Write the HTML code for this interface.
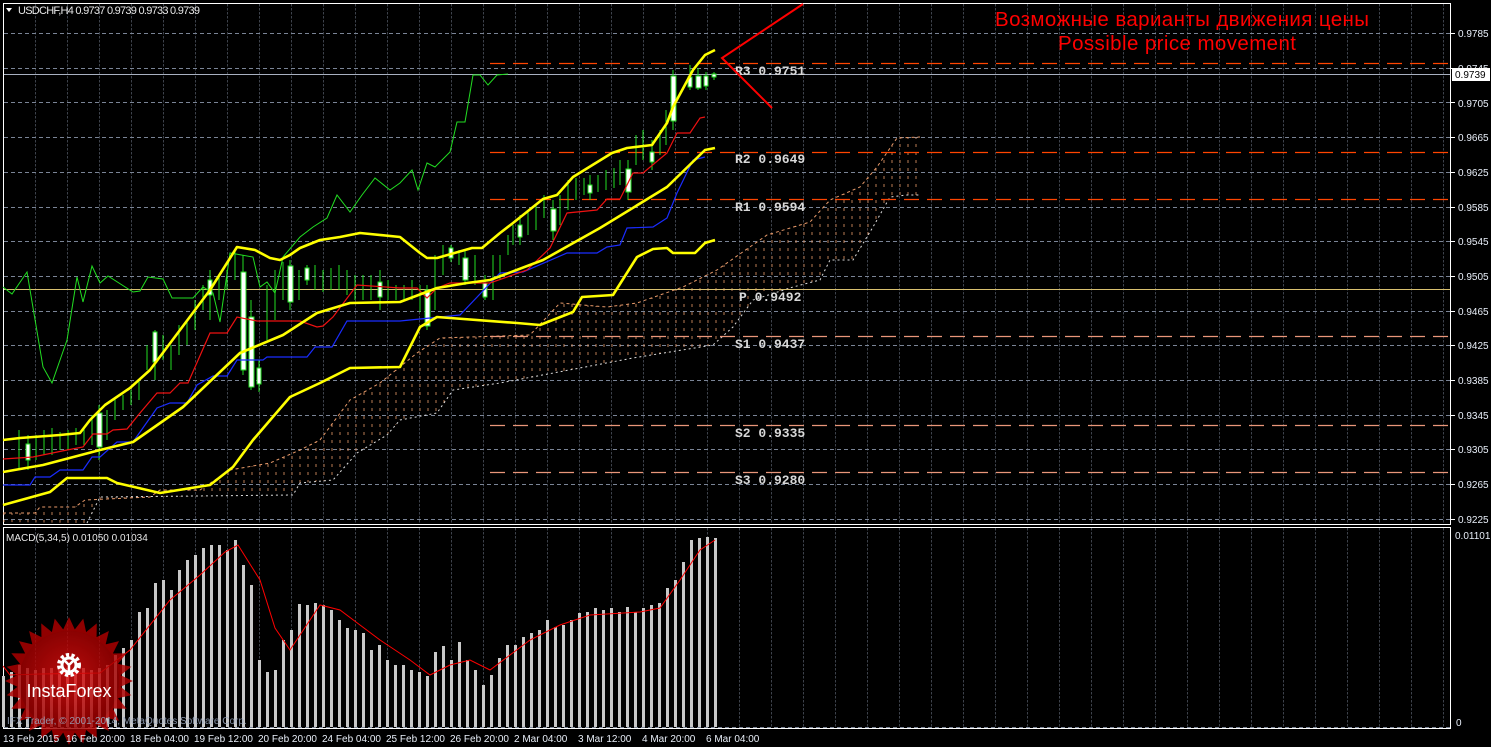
<!DOCTYPE html>
<html><head><meta charset="utf-8"><style>
html,body{margin:0;padding:0;background:#000;width:1491px;height:747px;overflow:hidden}
svg{display:block}
text{font-family:"Liberation Sans",sans-serif}
text.mono{font-family:"Liberation Mono",monospace;font-weight:bold}
</style></head><body>
<svg width="1491" height="747" viewBox="0 0 1491 747" xmlns="http://www.w3.org/2000/svg">
<defs>
<pattern id="vg" x="3.5" y="0" width="32" height="4" patternUnits="userSpaceOnUse">
<line x1="0" y1="0" x2="0" y2="2.5" stroke="#7a8496" stroke-width="1"/>
</pattern>
<pattern id="hatch" x="0" y="0" width="8" height="8" patternUnits="userSpaceOnUse">
<line x1="4" y1="0" x2="4" y2="3" stroke="#e89a6a" stroke-width="1"/>
</pattern>
<clipPath id="cloud"><polygon points="3,513 35,513 40,507 75,507 85,500 150,497 160,490 200,490 230,470 270,463 300,450 320,440 350,400 380,383 417,353 440,338 530,335 560,303 607,307 637,303 683,287 717,270 767,235 810,222 830,200 860,187 877,167 897,138 920,137 920,195 907,195 890,197 873,227 853,260 830,260 820,280 793,287 753,300 733,327 713,345 633,358 500,383 453,390 437,413 420,413 400,420 387,435 357,453 333,480 300,483 293,495 150,497 100,497 87,523 3,522"/></clipPath>
<radialGradient id="rg" cx="0.5" cy="0.45" r="0.5"><stop offset="0" stop-color="#e01010"/><stop offset="1" stop-color="#a00000"/></radialGradient>
<polygon id="spike" points="0,-64 -6.5,-50 6.5,-50"/>
</defs>
<rect x="3.5" y="3.5" width="1447" height="521" fill="none" stroke="#fff" stroke-width="1"/>
<rect x="3.5" y="527.5" width="1447" height="201" fill="none" stroke="#fff" stroke-width="1"/>
<rect x="4" y="4" width="1446" height="520" fill="url(#vg)"/>
<rect x="4" y="528" width="1446" height="200" fill="url(#vg)"/>
<g stroke="#7a8496" stroke-width="1" stroke-dasharray="4,3">
<line x1="4" y1="33.5" x2="1450" y2="33.5"/><line x1="4" y1="68.5" x2="1450" y2="68.5"/>
<line x1="4" y1="102.5" x2="1450" y2="102.5"/><line x1="4" y1="137.5" x2="1450" y2="137.5"/>
<line x1="4" y1="172.5" x2="1450" y2="172.5"/><line x1="4" y1="207.5" x2="1450" y2="207.5"/>
<line x1="4" y1="241.5" x2="1450" y2="241.5"/><line x1="4" y1="276.5" x2="1450" y2="276.5"/>
<line x1="4" y1="311.5" x2="1450" y2="311.5"/><line x1="4" y1="345.5" x2="1450" y2="345.5"/>
<line x1="4" y1="380.5" x2="1450" y2="380.5"/><line x1="4" y1="415.5" x2="1450" y2="415.5"/>
<line x1="4" y1="449.5" x2="1450" y2="449.5"/><line x1="4" y1="484.5" x2="1450" y2="484.5"/>
<line x1="4" y1="519.5" x2="1450" y2="519.5"/>
<line x1="4" y1="727.5" x2="1450" y2="727.5"/>
</g>
<rect x="0" y="130" width="930" height="400" fill="url(#hatch)" clip-path="url(#cloud)" opacity="0.8"/>
<polyline fill="none" stroke="#e89a6a" stroke-dasharray="3,3" points="3,513 35,513 40,507 75,507 85,500 150,497 160,490 200,490 230,470 270,463 300,450 320,440 350,400 380,383 417,353 440,338 530,335 560,303 607,307 637,303 683,287 717,270 767,235 810,222 830,200 860,187 877,167 897,138 920,137"/>
<polyline fill="none" stroke="#ddd" stroke-dasharray="2,3" points="87,523 100,497 293,495 300,483 333,480 357,453 387,435 400,420 437,413 453,390 500,383 633,358 713,345 733,327 753,300 793,287 820,280 830,260 853,260 873,227 890,197 907,195 920,195"/>
<g stroke-width="1.2" stroke-dasharray="15,8">
<line x1="490" y1="63.5" x2="1450" y2="63.5" stroke="#ff4500"/>
<line x1="490" y1="152.5" x2="1450" y2="152.5" stroke="#ff4500"/>
<line x1="490" y1="199.5" x2="1450" y2="199.5" stroke="#ff4500"/>
<line x1="490" y1="336.5" x2="1450" y2="336.5" stroke="#e9967a"/>
<line x1="490" y1="425.5" x2="1450" y2="425.5" stroke="#e9967a"/>
<line x1="490" y1="472.5" x2="1450" y2="472.5" stroke="#e9967a"/>
</g>
<line x1="4" y1="289.5" x2="1450" y2="289.5" stroke="#d8c070" stroke-width="1"/>
<line x1="4" y1="74.5" x2="1450" y2="74.5" stroke="#a8b0c0" stroke-width="1"/>
<g font-size="13" fill="#d8d8d8">
<text class="mono" x="735" y="75">R3  0.9751</text>
<text class="mono" x="735" y="163">R2  0.9649</text>
<text class="mono" x="735" y="211">R1  0.9594</text>
<text class="mono" x="739" y="301">P  0.9492</text>
<text class="mono" x="735" y="348">S1  0.9437</text>
<text class="mono" x="735" y="437">S2  0.9335</text>
<text class="mono" x="735" y="484">S3  0.9280</text>
</g>
<polyline fill="none" stroke="#22dd22" stroke-width="1" points="3,287 12,294 27,272 43,367 52,383 67,340 77,277 83,302 92,266 100,283 108,276 133,292 140,291 148,277 163,279 172,298 193,298 203,287 213,293 220,322 230,253 253,257 260,287 267,282 275,293 283,257 300,237 313,227 327,218 337,195 350,212 362,195 375,178 390,190 400,183 412,170 418,190 427,163 435,167 450,152 457,122 465,122 473,75 480,75 488,85 497,75 508,74"/>
<g stroke="#22dd22" stroke-width="1" fill="#fff">
<line x1="28" y1="435" x2="28" y2="470"/><rect x="26" y="444" width="4" height="16"/>
<line x1="99" y1="405" x2="99" y2="460"/><rect x="97" y="413" width="5" height="34"/>
<line x1="155" y1="330" x2="155" y2="380"/><rect x="153" y="332" width="4" height="30"/>
<line x1="210" y1="270" x2="210" y2="320"/><rect x="208" y="280" width="4" height="15"/>
<line x1="243" y1="255" x2="243" y2="375"/><rect x="241" y="272" width="5" height="98"/>
<line x1="251" y1="300" x2="251" y2="390"/><rect x="249" y="317" width="5" height="70"/>
<line x1="259" y1="360" x2="259" y2="392"/><rect x="257" y="368" width="4" height="16"/>
<line x1="290" y1="260" x2="290" y2="310"/><rect x="288" y="266" width="5" height="36"/>
<line x1="307" y1="265" x2="307" y2="285"/><rect x="305" y="268" width="4" height="12"/>
<line x1="380" y1="270" x2="380" y2="310"/><rect x="378" y="282" width="4" height="15"/>
<line x1="427" y1="285" x2="427" y2="330"/><rect x="425" y="290" width="5" height="36"/>
<line x1="451" y1="245" x2="451" y2="262"/><rect x="449" y="248" width="4" height="10"/>
<line x1="465" y1="250" x2="465" y2="285"/><rect x="463" y="258" width="5" height="22"/>
<line x1="485" y1="275" x2="485" y2="300"/><rect x="483" y="283" width="4" height="14"/>
<line x1="520" y1="215" x2="520" y2="245"/><rect x="518" y="225" width="4" height="12"/>
<line x1="553" y1="200" x2="553" y2="240"/><rect x="551" y="209" width="5" height="22"/>
<line x1="590" y1="175" x2="590" y2="200"/><rect x="588" y="185" width="4" height="8"/>
<line x1="628" y1="160" x2="628" y2="200"/><rect x="626" y="169" width="5" height="23"/>
<line x1="652" y1="140" x2="652" y2="170"/><rect x="650" y="152" width="4" height="10"/>
<line x1="673" y1="70" x2="673" y2="130"/><rect x="671" y="76" width="5" height="45"/>
<line x1="690" y1="65" x2="690" y2="90"/><rect x="688" y="77" width="4" height="10"/>
<line x1="698" y1="68" x2="698" y2="90"/><rect x="696" y="76" width="5" height="12"/>
<line x1="706" y1="72" x2="706" y2="90"/><rect x="704" y="76" width="4" height="10"/>
<line x1="714" y1="72" x2="714" y2="80"/><rect x="712" y="74" width="4" height="3"/>
</g>
<g stroke="#22dd22" stroke-width="1" fill="none">
<path d="M19 430V470M36 435V460M44 430V455M52 428V455M60 432V450M68 430V450M76 428V445M84 428V445M92 415V445M107 410V440M115 398V420M123 395V410M131 390V405M139 380V400M147 345V370M163 335V360M171 345V370M179 325V355M187 320V345M195 300V330M203 285V310M219 275V300M227 270V290M235 250V280M267 285V340M275 270V320M283 262V300M299 270V300M315 265V290M323 270V292M331 268V290M339 265V290M347 270V295M355 275V300M363 275V300M371 275V300M388 280V300M396 285V300M404 285V300M412 280V300M420 285V312M435 255V310M443 245V275M459 250V265M475 255V285M493 255V300M500 255V280M508 235V255M513 225V245M528 210V235M536 205V230M544 195V218M560 195V225M568 180V210M576 178V200M584 178V195M598 175V192M606 170V190M614 168V188M620 160V185M636 135V165M643 130V160M660 130V155M666 110V145"/>
</g>
<polyline fill="none" stroke="#1a2cff" stroke-width="1.2" points="3,485 30,485 35,477 50,477 60,470 83,470 92,457 100,457 117,442 133,442 157,408 170,403 187,403 197,385 213,376 227,376 237,360 263,360 267,357 307,357 315,347 332,347 347,321 400,321 460,315 500,273 523,272 567,253 597,253 607,247 620,245 627,228 653,227 667,218 677,193 693,160 705,157"/>
<polyline fill="none" stroke="#ee1111" stroke-width="1.2" points="3,459 33,457 67,450 83,447 93,434 107,434 113,430 127,429 140,413 157,393 170,393 180,383 188,383 210,333 227,333 237,317 257,321 300,321 317,327 323,326 333,317 357,285 400,288 417,288 427,298 437,288 450,283 490,283 527,270 550,248 567,213 597,210 607,199 620,199 633,173 643,173 667,153 677,133 690,133 700,118 705,117"/>
<g fill="none" stroke="#ffff00" stroke-width="2.6" stroke-linejoin="round">
<polyline points="3,440 20,438 60,435 80,433 90,420 105,405 130,388 150,370 180,330 210,290 237,247 255,250 270,258 280,260 290,255 300,248 320,240 340,237 360,233 400,237 420,253 427,258 437,258 472,248 482,248 500,233 513,223 533,207 543,199 557,195 573,177 612,153 627,148 652,145 667,123 673,107 693,70 705,55 715,50"/>
<polyline points="3,472 43,465 100,450 133,442 183,407 240,353 283,335 317,313 350,303 400,302 437,288 467,283 490,280 543,260 600,228 667,187 705,150 715,148"/>
<polyline points="3,505 50,492 67,478 107,478 117,483 160,493 210,485 233,467 253,440 290,397 320,383 350,368 400,367 420,327 437,317 517,323 540,325 573,312 582,297 613,295 637,257 653,249 667,248 673,253 695,253 705,243 715,240"/>
</g>
<polyline fill="none" stroke="#ff0000" stroke-width="2" points="803,4 722,58 772,108"/>
<text x="1182" y="26" font-size="20.5" fill="#ff0000" text-anchor="middle" textLength="374">Возможные варианты движения цены</text>
<text x="1177" y="50" font-size="20.5" fill="#ff0000" text-anchor="middle" textLength="238">Possible price movement</text>
<polygon points="6,8 12,8 9,12" fill="#fff"/>
<text x="18" y="14" font-size="11" fill="#e8e8e8" textLength="182">USDCHF,H4  0.9737 0.9739 0.9733 0.9739</text>
<text x="6" y="541" font-size="10" fill="#e8e8e8">MACD(5,34,5) 0.01050 0.01034</text>
<path fill="none" stroke="#c8c8c8" stroke-width="3" d="M3.5 676V727M11.5 672V727M19.5 665V727M27.5 668V727M35.5 670V727M43.5 668V727M51.5 668V727M59.5 667V727M67.5 668V727M75.5 670V727M83.5 668V727M91.5 670V727M99.5 668V727M107.5 665V727M115.5 655V727M123.5 648V727M131.5 640V727M139.5 612V727M147.5 608V727M155.5 583V727M163.5 580V727M171.5 590V727M179.5 570V727M187.5 560V727M195.5 555V727M203.5 548V727M211.5 545V727M219.5 545V727M227.5 550V727M235.5 540V727M243.5 565V727M251.5 585V727M259.5 660V727M267.5 672V727M275.5 670V727M283.5 640V727M291.5 630V727M299.5 604V727M307.5 605V727M315.5 603V727M323.5 605V727M331.5 610V727M339.5 620V727M347.5 628V727M355.5 630V727M363.5 633V727M371.5 650V727M379.5 645V727M387.5 660V727M395.5 665V727M403.5 665V727M411.5 670V727M419.5 672V727M427.5 676V727M435.5 652V727M443.5 646V727M451.5 660V727M459.5 642V727M467.5 660V727M475.5 670V727M483.5 685V727M491.5 675V727M499.5 658V727M507.5 645V727M515.5 645V727M523.5 637V727M531.5 633V727M539.5 630V727M547.5 620V727M555.5 627V727M563.5 625V727M571.5 620V727M579.5 613V727M587.5 612V727M595.5 608V727M603.5 610V727M611.5 608V727M619.5 612V727M627.5 607V727M635.5 612V727M643.5 608V727M651.5 605V727M659.5 603V727M667.5 588V727M675.5 580V727M683.5 562V727M691.5 540V727M699.5 538V727M707.5 537V727M715.5 538V727"/>
<polyline fill="none" stroke="#ff0000" stroke-width="1" points="3,666 10,675 40,674 100,673 130,650 170,600 200,575 225,552 238,545 260,580 275,628 290,650 310,620 320,605 340,610 360,625 380,640 410,660 430,675 450,665 470,660 490,670 510,655 530,640 560,625 590,615 640,612 660,608 680,580 700,550 715,540"/>
<g opacity="0.82" transform="translate(69,681)">
<circle r="52" fill="url(#rg)"/>
<g fill="#b00000">
<use href="#spike"/><use href="#spike" transform="rotate(12.86)"/><use href="#spike" transform="rotate(25.71)"/><use href="#spike" transform="rotate(38.57)"/><use href="#spike" transform="rotate(51.43)"/><use href="#spike" transform="rotate(64.29)"/><use href="#spike" transform="rotate(77.14)"/><use href="#spike" transform="rotate(90)"/><use href="#spike" transform="rotate(102.86)"/><use href="#spike" transform="rotate(115.71)"/><use href="#spike" transform="rotate(128.57)"/><use href="#spike" transform="rotate(141.43)"/><use href="#spike" transform="rotate(154.29)"/><use href="#spike" transform="rotate(167.14)"/><use href="#spike" transform="rotate(180)"/><use href="#spike" transform="rotate(192.86)"/><use href="#spike" transform="rotate(205.71)"/><use href="#spike" transform="rotate(218.57)"/><use href="#spike" transform="rotate(231.43)"/><use href="#spike" transform="rotate(244.29)"/><use href="#spike" transform="rotate(257.14)"/><use href="#spike" transform="rotate(270)"/><use href="#spike" transform="rotate(282.86)"/><use href="#spike" transform="rotate(295.71)"/><use href="#spike" transform="rotate(308.57)"/><use href="#spike" transform="rotate(321.43)"/><use href="#spike" transform="rotate(334.29)"/><use href="#spike" transform="rotate(347.14)"/>
</g>
</g>
<g transform="translate(69,665)" fill="none" stroke="#fff">
<circle r="9.5" stroke-width="5" stroke-dasharray="3,2.2"/>
<circle r="7" stroke-width="3"/>
<path d="M-4 -4L0 0L4 -4M0 0V10" stroke-width="2.5"/>
</g>
<text x="69" y="697" font-size="18" fill="#fff" text-anchor="middle">InstaForex</text>
<text x="7" y="724" font-size="10" fill="#9aa8c0" opacity="0.85">IFX Trader, © 2001-2014, MetaQuotes Software Corp.</text>
<g stroke="#fff" stroke-width="1">
<line x1="1451" y1="33.5" x2="1455" y2="33.5"/><line x1="1451" y1="68.5" x2="1455" y2="68.5"/>
<line x1="1451" y1="102.5" x2="1455" y2="102.5"/><line x1="1451" y1="137.5" x2="1455" y2="137.5"/>
<line x1="1451" y1="172.5" x2="1455" y2="172.5"/><line x1="1451" y1="207.5" x2="1455" y2="207.5"/>
<line x1="1451" y1="241.5" x2="1455" y2="241.5"/><line x1="1451" y1="276.5" x2="1455" y2="276.5"/>
<line x1="1451" y1="311.5" x2="1455" y2="311.5"/><line x1="1451" y1="345.5" x2="1455" y2="345.5"/>
<line x1="1451" y1="380.5" x2="1455" y2="380.5"/><line x1="1451" y1="415.5" x2="1455" y2="415.5"/>
<line x1="1451" y1="449.5" x2="1455" y2="449.5"/><line x1="1451" y1="484.5" x2="1455" y2="484.5"/>
<line x1="1451" y1="519.5" x2="1455" y2="519.5"/>
</g>
<g font-size="10" fill="#e8eef8">
<text x="1458" y="37">0.9785</text><text x="1458" y="72">0.9745</text>
<text x="1458" y="107">0.9705</text><text x="1458" y="141">0.9665</text>
<text x="1458" y="176">0.9625</text><text x="1458" y="211">0.9585</text>
<text x="1458" y="245">0.9545</text><text x="1458" y="280">0.9505</text>
<text x="1458" y="315">0.9465</text><text x="1458" y="349">0.9425</text>
<text x="1458" y="384">0.9385</text><text x="1458" y="419">0.9345</text>
<text x="1458" y="453">0.9305</text><text x="1458" y="488">0.9265</text>
<text x="1458" y="523">0.9225</text>
<text x="1455" y="539">0.01101</text>
<text x="1456" y="726">0</text>
</g>
<rect x="1452" y="68" width="38" height="13" fill="#fff"/>
<text x="1455" y="78" font-size="10" fill="#000">0.9739</text>
<g font-size="10" fill="#e8eef8">
<text x="3" y="742">13 Feb 2015</text>
<text x="66" y="742">16 Feb 20:00</text>
<text x="130" y="742">18 Feb 04:00</text>
<text x="194" y="742">19 Feb 12:00</text>
<text x="258" y="742">20 Feb 20:00</text>
<text x="322" y="742">24 Feb 04:00</text>
<text x="386" y="742">25 Feb 12:00</text>
<text x="450" y="742">26 Feb 20:00</text>
<text x="514" y="742">2 Mar 04:00</text>
<text x="578" y="742">3 Mar 12:00</text>
<text x="642" y="742">4 Mar 20:00</text>
<text x="706" y="742">6 Mar 04:00</text>
</g>
</svg>
</body></html>
